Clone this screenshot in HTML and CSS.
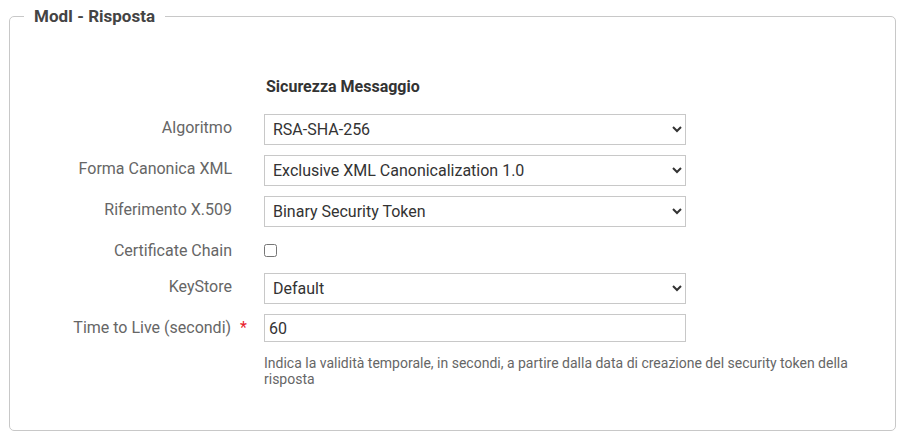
FILE: index.html
```html
<!DOCTYPE html>
<html lang="it">
<head>
<meta charset="utf-8">
<title>ModI - Risposta</title>
<link rel="stylesheet" href="styles.css">
</head>
<body>
<fieldset class="panel">
  <legend class="panel-title">ModI - Risposta</legend>
  <div class="form">
    <div class="label"></div>
    <div class="section-title">Sicurezza Messaggio</div>

    <label class="label" for="alg">Algoritmo</label>
    <div class="control">
      <select id="alg" class="field"><option>RSA-SHA-256</option></select>
    </div>

    <label class="label" for="canon">Forma Canonica XML</label>
    <div class="control">
      <select id="canon" class="field"><option>Exclusive XML Canonicalization 1.0</option></select>
    </div>

    <label class="label" for="rif">Riferimento X.509</label>
    <div class="control">
      <select id="rif" class="field"><option>Binary Security Token</option></select>
    </div>

    <label class="label label-check" for="chain">Certificate Chain</label>
    <div class="control control-check">
      <input id="chain" type="checkbox" class="check">
    </div>

    <label class="label" for="ks">KeyStore</label>
    <div class="control">
      <select id="ks" class="field"><option>Default</option></select>
    </div>

    <label class="label label-ttl" for="ttl">Time to Live (secondi)<span class="req">*</span></label>
    <div class="control">
      <input id="ttl" type="text" class="field input" value="60">
    </div>

    <div class="label"></div>
    <p class="help">Indica la validità temporale, in secondi, a partire dalla data di creazione del security token della risposta</p>
  </div>
</fieldset>
</body>
</html>
```

FILE: styles.css
```css
html, body {
  margin: 0;
  padding: 0;
  background: #ffffff;
}

body {
  font-family: Roboto, "Liberation Sans", Arial, sans-serif;
  color: #333333;
}

.panel {
  margin: 6px 12px 0 9px;
  padding: 0 14px 43px 14px;
  border: 1px solid #c8c8c8;
  border-radius: 5px;
  min-width: 0;
}

.panel-title {
  padding: 0 10px;
  font-size: 17px;
  line-height: 20px;
  font-weight: 700;
  color: #444444;
}

.form {
  display: grid;
  grid-template-columns: 208px 1fr;
  column-gap: 32px;
  row-gap: 10px;
  align-items: center;
  margin-top: 51px;
}

.section-title {
  padding-left: 2px;
  font-size: 16px;
  line-height: 20px;
  font-weight: 700;
  color: #333333;
  margin-bottom: 7px;
}

.label {
  text-align: right;
  font-size: 16px;
  line-height: 18px;
  color: #666666;
  padding-bottom: 3px;
}

.label-check {
  padding-bottom: 0;
  padding-top: 1px;
}

.label-ttl {
  padding-bottom: 1px;
}

.req {
  color: #e8202a;
  margin-left: 9px;
  margin-right: -15px;
}

.control {
  width: 422px;
  display: flex;
}

.control-check {
  height: 26px;
  align-items: center;
}

.field {
  box-sizing: border-box;
  width: 100%;
  height: 31px;
  border: 1px solid #c8c8c8;
  border-radius: 0;
  background-color: #ffffff;
  padding: 0 4px 0 4px;
  font-family: Roboto, "Liberation Sans", Arial, sans-serif;
  font-size: 16px;
  color: #333333;
  margin: 0;
}

.input {
  height: 28px;
  padding: 0 4px;
  outline: none;
}

.check {
  width: 13px;
  height: 13px;
  margin: 0;
}

.help {
  margin: 3px 0 0 0;
  font-size: 14px;
  line-height: 16px;
  color: #666666;
}
```
